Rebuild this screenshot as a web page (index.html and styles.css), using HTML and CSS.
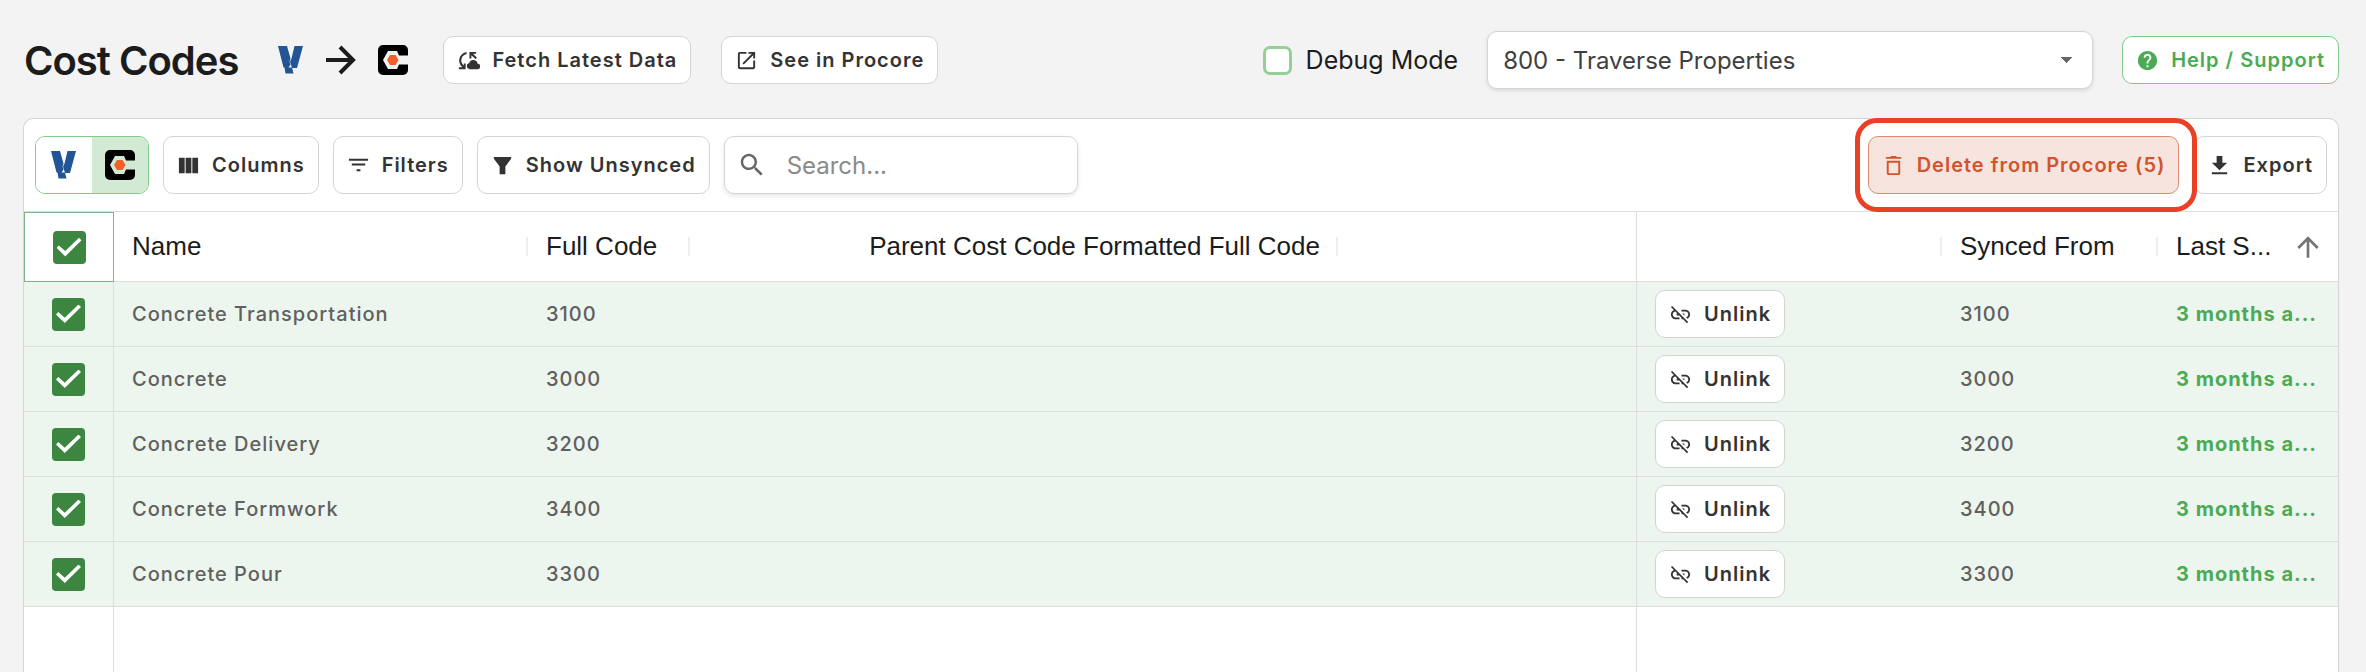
FILE: index.html
```html
<!DOCTYPE html>
<html lang="en">

<head>
    <meta charset="UTF-8" />
    <meta name="viewport" content="width=device-width, initial-scale=1.0" />
    <title>Cost Codes</title>
    <link rel="stylesheet" href="styles.css">
</head>

<body>
    <!-- shared icons -->
    <svg class="sprite" aria-hidden="true">
        <symbol id="logo-v" viewBox="0 0 26 30">
            <path fill="#225595" d="M0 1h9l3.500 12.500-1 3 1 3-2 3H5.500zM16.500 1H25l-6 22h-5l-2-6.500 1.500-3zM6.500 22.500H14l1.500 6H7.500z" />
        </symbol>
        <symbol id="logo-c" viewBox="0 0 30 30">
            <path fill="#000" d="M5 0h20a5 5 0 0 1 5 5v5.500h-9L19 6h-9L5 15l5 9h9l2-4.500h9V25a5 5 0 0 1-5 5H5a5 5 0 0 1-5-5V5a5 5 0 0 1 5-5z" />
            <path fill="#f06028" d="M12 10h5.500l3 5-3 5H12l-3-5z" />
        </symbol>
        <symbol id="unlink" viewBox="0 0 24 24">
            <path d="M17 7h-4v1.900h4c1.710 0 3.100 1.390 3.100 3.100 0 1.430-.98 2.630-2.310 2.980l1.460 1.460C20.880 15.610 22 13.950 22 12c0-2.760-2.240-5-5-5zm-1 4h-2.190l2 2H16v-2zM2 4.270l3.110 3.110C3.290 8.120 2 9.910 2 12c0 2.760 2.240 5 5 5h4v-1.900H7c-1.710 0-3.100-1.390-3.100-3.100 0-1.590 1.210-2.900 2.760-3.070L8.730 11H8v2h2.730L13 15.270V17h1.730l4.010 4L20 19.740 3.270 3 2 4.270z" />
        </symbol>
    </svg>

    <header class="page-header">
        <h1>Cost Codes</h1>
        <div class="direction">
            <svg class="logo-v"><use href="#logo-v" /></svg>
            <svg class="arrow" viewBox="0 0 30 30"><path d="M0 15h27M14 2l13 13-13 13" /></svg>
            <svg class="logo-c"><use href="#logo-c" /></svg>
        </div>
        <button class="btn btn-small">
            <svg class="icon" viewBox="0 0 24 24"><path d="M10 3v2.200C6.500 6 4.500 8.700 4.500 12c0 2.200 1 4 2.500 5.300V15h2v6H2v-2h3.500C3.500 17.300 2.300 14.800 2.300 12 2.300 7.500 5.500 3.800 10 3zM13 3h7v2h-3.200l4 4-1.500 1.500-4.300-4V10h-2zM21.500 15.500a4.500 4.500 0 0 0-8.700-1A3.300 3.300 0 0 0 13 21h8.500a2.750 2.750 0 0 0 0-5.500z" /></svg>
            Fetch Latest Data
        </button>
        <button class="btn btn-small">
            <svg class="icon" viewBox="0 0 24 24"><path d="M19 19H5V5h7V3H5c-1.110 0-2 .9-2 2v14c0 1.100.89 2 2 2h14c1.100 0 2-.9 2-2v-7h-2v7zM14 3v2h3.590l-9.830 9.830 1.410 1.410L19 6.410V10h2V3h-7z" /></svg>
            See in Procore
        </button>

        <div class="header-right">
            <label class="debug"><input type="checkbox" class="debug-box" />Debug Mode</label>
            <select class="company" aria-label="Company">
                <option>800 - Traverse Properties</option>
            </select>
            <button class="btn btn-small btn-help">
                <svg class="icon" viewBox="0 0 24 24"><path d="M12 2C6.480 2 2 6.480 2 12s4.480 10 10 10 10-4.480 10-10S17.520 2 12 2zm1 17h-2v-2h2v2zm2.070-7.750l-.9.920C13.450 12.900 13 13.500 13 15h-2v-.5c0-1.100.45-2.100 1.170-2.830l1.240-1.260c.37-.36.59-.86.59-1.410 0-1.100-.9-2-2-2s-2 .9-2 2H8c0-2.210 1.790-4 4-4s4 1.790 4 4c0 .88-.36 1.680-.93 2.250z" /></svg>
                Help / Support
            </button>
        </div>
    </header>

    <main class="grid">
        <div class="toolbar">
            <div class="toggle">
                <button aria-label="Vista"><svg class="logo-v"><use href="#logo-v" /></svg></button>
                <button class="active" aria-label="Procore"><svg class="logo-c"><use href="#logo-c" /></svg></button>
            </div>
            <button class="btn">
                <svg class="icon" viewBox="0 0 24 24"><path d="M2 4h6v16H2zM9 4h6v16H9zM16 4h6v16h-6z" /></svg>
                Columns
            </button>
            <button class="btn">
                <svg class="icon" viewBox="0 0 24 24"><path d="M10 18h4v-2h-4v2zM2 5v2h20V5H2zm3 7h14v-2H5v2z" /></svg>
                Filters
            </button>
            <button class="btn">
                <svg class="icon" viewBox="0 0 24 24"><path d="M3 3h18v2l-6 8v8H9v-8L3 5z" /></svg>
                Show Unsynced
            </button>
            <label class="search">
                <svg viewBox="0 0 24 24"><path d="M15.500 14h-.79l-.28-.27C15.410 12.590 16 11.110 16 9.500 16 5.910 13.090 3 9.500 3S3 5.910 3 9.500 5.910 16 9.500 16c1.610 0 3.090-.59 4.230-1.570l.27.28v.79l5 4.990L20.490 19l-4.990-5zm-6 0C7.010 14 5 11.990 5 9.500S7.010 5 9.500 5 14 7.010 14 9.500 11.990 14 9.500 14z" /></svg>
                <input type="text" placeholder="Search..." aria-label="Search" />
            </label>
            <div class="toolbar-right">
                <div class="highlight">
                    <button class="btn btn-delete">
                        <svg class="icon" viewBox="0 0 24 24"><path d="M5 8v12c0 1.100.9 2 2 2h10c1.100 0 2-.9 2-2V7H5zm2 1h10v11H7zM15.500 3l-1-1h-5l-1 1H4v2h16V3z" /></svg>
                        Delete from Procore (5)
                    </button>
                </div>
                <button class="btn">
                    <svg class="icon" viewBox="0 0 24 24"><path d="M20 9h-5V2H9v7H4l8 8 8-8zM4 19v2h16v-2H4z" /></svg>
                    Export
                </button>
            </div>
        </div>

        <table>
            <colgroup>
                <col class="col-check"><col class="col-name"><col class="col-code"><col class="col-parent"><col class="col-space"><col class="col-action"><col class="col-from"><col class="col-last">
            </colgroup>
            <thead>
                <tr>
                    <th class="check focused"><input type="checkbox" checked aria-label="Select all" /></th>
                    <th class="sep">Name</th>
                    <th class="sep">Full Code</th>
                    <th class="sep right">Parent Cost Code Formatted Full Code</th>
                    <th class="pin"></th>
                    <th class="sep"></th>
                    <th class="sep">Synced From</th>
                    <th><div class="sorted">Last S...<svg viewBox="0 0 24 24"><path d="M4 12l1.410 1.410L11 7.830V20h2V7.830l5.580 5.590L20 12l-8-8-8 8z" /></svg></div></th>
                </tr>
            </thead>
            <tbody>
                <tr>
                    <td class="check"><input type="checkbox" checked aria-label="Select row" /></td>
                    <td>Concrete Transportation</td>
                    <td>3100</td>
                    <td></td>
                    <td class="pin"></td>
                    <td class="action"><button class="btn btn-small"><svg class="icon"><use href="#unlink" /></svg>Unlink</button></td>
                    <td>3100</td>
                    <td class="synced">3 months a...</td>
                </tr>
                <tr>
                    <td class="check"><input type="checkbox" checked aria-label="Select row" /></td>
                    <td>Concrete</td>
                    <td>3000</td>
                    <td></td>
                    <td class="pin"></td>
                    <td class="action"><button class="btn btn-small"><svg class="icon"><use href="#unlink" /></svg>Unlink</button></td>
                    <td>3000</td>
                    <td class="synced">3 months a...</td>
                </tr>
                <tr>
                    <td class="check"><input type="checkbox" checked aria-label="Select row" /></td>
                    <td>Concrete Delivery</td>
                    <td>3200</td>
                    <td></td>
                    <td class="pin"></td>
                    <td class="action"><button class="btn btn-small"><svg class="icon"><use href="#unlink" /></svg>Unlink</button></td>
                    <td>3200</td>
                    <td class="synced">3 months a...</td>
                </tr>
                <tr>
                    <td class="check"><input type="checkbox" checked aria-label="Select row" /></td>
                    <td>Concrete Formwork</td>
                    <td>3400</td>
                    <td></td>
                    <td class="pin"></td>
                    <td class="action"><button class="btn btn-small"><svg class="icon"><use href="#unlink" /></svg>Unlink</button></td>
                    <td>3400</td>
                    <td class="synced">3 months a...</td>
                </tr>
                <tr>
                    <td class="check"><input type="checkbox" checked aria-label="Select row" /></td>
                    <td>Concrete Pour</td>
                    <td>3300</td>
                    <td></td>
                    <td class="pin"></td>
                    <td class="action"><button class="btn btn-small"><svg class="icon"><use href="#unlink" /></svg>Unlink</button></td>
                    <td>3300</td>
                    <td class="synced">3 months a...</td>
                </tr>
                <tr class="filler">
                    <td class="check"></td>
                    <td colspan="4" class="pin"></td>
                    <td colspan="3">&nbsp;</td>
                </tr>
            </tbody>
        </table>
    </main>
</body>

</html>
```

FILE: styles.css
```css
* {
    box-sizing: border-box;
}

body {
    margin: 0;
    min-height: 100vh;
    display: flex;
    flex-direction: column;
    background-color: #f3f3f3;
    color: #1c1c1c;
    font-family: Inter, "Liberation Sans", sans-serif;
    font-size: 20px;
}

.sprite {
    display: none;
}

.page-header {
    display: flex;
    align-items: center;
    height: 118px;
    flex-shrink: 0;
    padding: 2px 27px 0 24px;
}

h1 {
    margin: 0 40px 0 0;
    font-size: 40px;
    font-weight: 600;
    letter-spacing: -1px;
    white-space: nowrap;
}

.direction {
    display: flex;
    align-items: center;
    gap: 22px;
    margin-right: 35px;
}

.logo-v {
    width: 26px;
    height: 30px;
    display: block;
}

.logo-c {
    width: 30px;
    height: 30px;
    display: block;
}

.arrow {
    width: 30px;
    height: 30px;
    fill: none;
    stroke: #1c1c1c;
    stroke-width: 4;
}

.btn {
    display: flex;
    align-items: center;
    gap: 12px;
    height: 58px;
    padding: 0 13px;
    background-color: #fff;
    border: 1px solid #d4d4d4;
    border-radius: 10px;
    color: #333;
    font-family: inherit;
    font-size: 20px;
    font-weight: 600;
    letter-spacing: 1px;
    white-space: nowrap;
    cursor: pointer;
}

.btn-small {
    height: 48px;
}

.page-header > .btn {
    margin-right: 30px;
}

.icon {
    width: 23px;
    height: 23px;
    fill: currentColor;
    flex-shrink: 0;
}

.header-right {
    display: flex;
    align-items: center;
    gap: 29px;
    margin-left: auto;
}

.debug {
    display: flex;
    align-items: center;
    gap: 14px;
    font-size: 25px;
    white-space: nowrap;
}

.debug-box {
    appearance: none;
    width: 29px;
    height: 29px;
    margin: 0;
    background-color: #fff;
    border: 3px solid #94cf98;
    border-radius: 7px;
}

.company {
    appearance: none;
    width: 606px;
    height: 58px;
    padding: 0 40px 0 15px;
    border: 1px solid #d4d4d4;
    border-radius: 10px;
    background: linear-gradient(to bottom left, #666 50%, transparent 50%) right 26px center / 6px 6px no-repeat,
        linear-gradient(to bottom right, #666 50%, transparent 50%) right 20px center / 6px 6px no-repeat,
        #fff;
    box-shadow: 0 2px 4px rgba(0, 0, 0, 0.1);
    color: #404040;
    font-family: inherit;
    font-size: 24px;
}

.btn-help {
    color: #4caa54;
    border-color: #84c98a;
}

.grid {
    flex: 1;
    display: flex;
    flex-direction: column;
    margin: 0 27px 0 23px;
    background-color: #fff;
    border: 1px solid #d4d4d4;
    border-bottom: none;
    border-radius: 10px 10px 0 0;
}

.toolbar {
    display: flex;
    align-items: center;
    gap: 14px;
    height: 93px;
    flex-shrink: 0;
    padding: 0 11px;
    border-bottom: 1px solid #dedede;
}

.toggle {
    display: flex;
    height: 58px;
    border: 1px solid #84c98a;
    border-radius: 10px;
    overflow: hidden;
}

.toggle button {
    display: flex;
    align-items: center;
    justify-content: center;
    width: 56px;
    padding: 0;
    border: none;
    background-color: #fff;
    cursor: pointer;
}

.toggle .active {
    background-color: #d2ead4;
}

.search {
    display: flex;
    align-items: center;
    gap: 20px;
    width: 354px;
    height: 58px;
    padding: 0 12px;
    border: 1px solid #d4d4d4;
    border-radius: 10px;
    box-shadow: 0 2px 4px rgba(0, 0, 0, 0.1);
}

.search svg {
    width: 30px;
    height: 30px;
    fill: #666;
    flex-shrink: 0;
}

.search input {
    width: 100%;
    min-width: 0;
    padding: 0;
    border: none;
    outline: none;
    font-family: inherit;
    font-size: 24px;
}

.search input::placeholder {
    color: #8a8a8a;
}

.toolbar-right {
    display: flex;
    gap: 15px;
    margin-left: auto;
}

.highlight {
    position: relative;
}

/* red ring around the delete action */
.highlight::after {
    content: "";
    position: absolute;
    inset: -18px;
    left: -13px;
    border: 5px solid #ea4025;
    border-radius: 22px;
    pointer-events: none;
    z-index: 1;
}

.btn-delete {
    background-color: #f8e4df;
    border-color: #e08a70;
    color: #d3532c;
}

table {
    flex: 1;
    width: 100%;
    table-layout: fixed;
    border-collapse: separate;
    border-spacing: 0;
}

.col-check { width: 90px; }
.col-name { width: 414px; }
.col-code { width: 162px; }
.col-parent { width: 648px; }
.col-action { width: 305px; }
.col-from { width: 216px; }
.col-last { width: 180px; }

th,
td {
    height: 65px;
    padding: 0 18px;
    border-bottom: 1px solid #dedede;
    text-align: left;
    white-space: nowrap;
}

th {
    position: relative;
    height: 70px;
    font-family: "Liberation Sans", Arial, sans-serif;
    font-size: 26px;
    font-weight: 400;
}

.sep::after {
    content: "";
    position: absolute;
    top: 25px;
    right: 0;
    width: 2px;
    height: 19px;
    background-color: #eee;
}

.right {
    text-align: right;
}

td {
    color: #606060;
    font-weight: 500;
    letter-spacing: 1px;
}

tbody td {
    background-color: #edf6ee;
}

.check {
    padding: 0;
    border-right: 1px solid #dedede;
    text-align: center;
}

.focused {
    border: 1px solid #7fb284;
}

.pin {
    border-right: 1px solid #dedede;
}

.check input {
    appearance: none;
    width: 33px;
    height: 33px;
    margin: 0;
    display: inline-grid;
    place-items: center;
    vertical-align: middle;
    background-color: #3c8642;
    border-radius: 4px;
}

.check input::before {
    content: "";
    width: 25px;
    height: 19px;
    background-color: #fff;
    clip-path: polygon(0 52%, 9% 40%, 35% 70%, 90% 0, 100% 13%, 35% 98%);
}

.synced {
    color: #4caa54;
    font-weight: 700;
}

.sorted {
    display: flex;
    align-items: center;
    justify-content: space-between;
    margin-right: -4px;
}

.sorted svg {
    width: 32px;
    height: 32px;
    fill: #757575;
}

/* takes the height left under the last row */
.filler td {
    height: auto;
    border-bottom: none;
    background-color: #fff;
}
```
